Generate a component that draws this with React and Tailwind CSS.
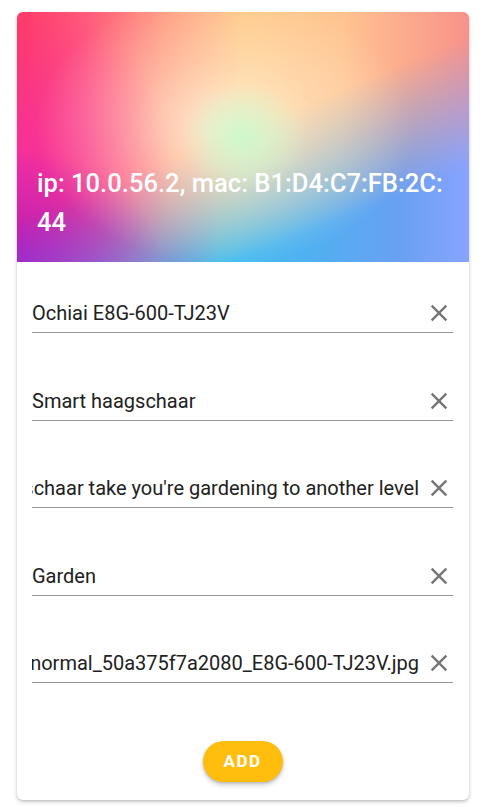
import React from 'react';

const fields = [
  { value: "Ochiai E8G-600-TJ23V" },
  { value: "Smart haagschaar" },
  { value: "Smart haagschaar take you're gardening to another level", end: true },
  { value: "Garden" },
  { value: "normal_50a375f7a2080_E8G-600-TJ23V.jpg", end: true },
];

function CloseIcon() {
  return (
    <svg viewBox="0 0 24 24" className="w-[28px] h-[28px] shrink-0" fill="#757575">
      <path d="M19 6.41 17.59 5 12 10.59 6.41 5 5 6.41 10.59 12 5 17.59 6.41 19 12 13.41 17.59 19 19 17.59 13.41 12z" />
    </svg>
  );
}

function Field({ value, end }) {
  return (
    <div className="flex items-center h-[41px] border-b border-[#949494] pt-[8px] pb-[6px]">
      <div className={`flex-1 min-w-0 overflow-hidden flex mr-[6px] ${end ? 'justify-end' : 'justify-start'}`}>
        <span className="whitespace-nowrap text-[20px] leading-[26px] text-[#212121]">{value}</span>
      </div>
      <CloseIcon />
    </div>
  );
}

export default function App() {
  return (
    <div className="min-h-screen bg-white pt-3 px-[17px] font-['Roboto','Liberation_Sans',sans-serif]">
      <div className="w-[452px] rounded-md bg-white shadow-[0_2px_4px_rgba(0,0,0,0.18),0_1px_2px_rgba(0,0,0,0.12)] overflow-hidden">
        {/* Header: warm base, cool layer masked along the diagonal, pale glow + title on top */}
        <div className="grid h-[250px] [background-image:radial-gradient(ellipse_32%_45%_at_0%_100%,#b01cc0,rgba(176,28,192,0)),radial-gradient(ellipse_35%_70%_at_0%_65%,#f52ea0,rgba(245,46,160,0)),linear-gradient(90deg,#ff3a62_0%,#ff5a7c_15%,#ff9a80_33%,#ffc888_50%,#ffc390_72%,#f8928a_100%)]">
          <div className="[grid-area:1/1] [background-image:linear-gradient(90deg,#7a50e0_0%,#6a72e8_20%,#48c0ee_45%,#50b0f0_65%,#6aa0f2_85%,#88a4ff_100%)] [mask-image:linear-gradient(158deg,transparent_48%,black_78%)]" />
          <div className="relative [grid-area:1/1] flex flex-col justify-end px-5 pb-5 [background-image:radial-gradient(ellipse_14%_22%_at_50%_50%,rgba(200,250,205,0.9),rgba(200,250,205,0)),radial-gradient(ellipse_42%_55%_at_46%_46%,rgba(255,248,225,0.8),rgba(255,248,225,0.35)_50%,rgba(255,248,225,0)_100%)]">
            <h1 className="text-white text-[25.6px] leading-[39px] font-medium">
              <span className="block whitespace-nowrap">ip: 10.0.56.2, mac: B1:D4:C7:FB:2C:</span>
              <span className="block">44</span>
            </h1>
          </div>
        </div>

        {/* Form */}
        <div className="pl-[15px] pr-[16px] pt-[30px] pb-[18px] flex flex-col">
          <div className="flex flex-col gap-[46.5px]">
            {fields.map((f) => (
              <Field key={f.value} value={f.value} end={f.end} />
            ))}
          </div>
          <div className="flex justify-center mt-[58px]">
            <button className="w-[80px] h-[41px] rounded-full bg-[#ffbe0d] text-white text-[17px] font-bold tracking-[1.5px] shadow-[0_3px_5px_rgba(0,0,0,0.2),0_1px_2px_rgba(0,0,0,0.14)]">
              ADD
            </button>
          </div>
        </div>
      </div>
    </div>
  );
}
